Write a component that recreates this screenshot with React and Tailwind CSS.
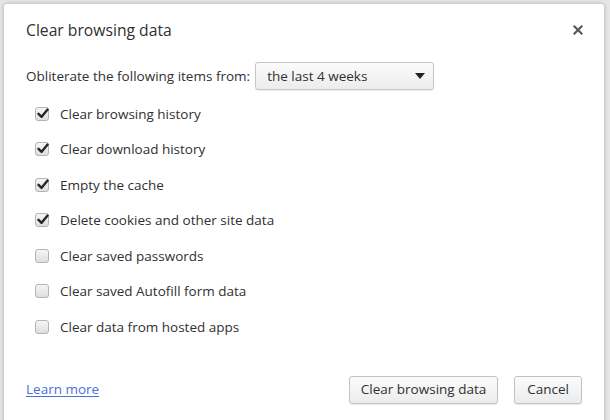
import React from "react";

const font = { fontFamily: '"Open Sans", "Noto Sans", sans-serif' };

function Check({ checked }) {
  return (
    <span className="relative flex h-[14px] w-[14px] items-center justify-center rounded-[3px] border border-[#b4b4b4] bg-gradient-to-b from-[#f6f6f6] to-[#dedede]">
      {checked && (
        <svg width="12" height="11" viewBox="0 0 12 11" className="absolute left-[1px] top-[0px]">
          <path d="M1.5 5.8 L4.6 8.8 L10.6 1.6" fill="none" stroke="#262626" strokeWidth="2.4" strokeLinecap="round" strokeLinejoin="round" />
        </svg>
      )}
    </span>
  );
}

const items = [
  ["Clear browsing history", true],
  ["Clear download history", true],
  ["Empty the cache", true],
  ["Delete cookies and other site data", true],
  ["Clear saved passwords", false],
  ["Clear saved Autofill form data", false],
  ["Clear data from hosted apps", false],
];

export default function App() {
  return (
    <div className="h-[420px] w-[610px] overflow-hidden bg-[#e6e6e6] pl-[4px] pt-[4px]" style={font}>
      <div className="h-[430px] w-[600px] rounded-[3px] bg-white px-[22px] text-[#303030] shadow-[0_0_4px_rgba(0,0,0,0.25)]">
        <div className="flex items-center justify-between pt-[16px]">
          <div className="text-[15.7px] leading-[20px]">Clear browsing data</div>
          <svg width="10" height="10" viewBox="0 0 10 10" className="mr-[-1px]">
            <path d="M1.5 1.5 L8.5 8.5 M8.5 1.5 L1.5 8.5" stroke="#595959" strokeWidth="2.2" strokeLinecap="square" />
          </svg>
        </div>
        <div className="mt-[22px] flex items-center text-[13.5px]">
          <span className="mr-[5px]">Obliterate the following items from:</span>
          <div className="flex h-[28px] w-[179px] items-center justify-between rounded-[3px] border border-[#c6c6c6] bg-gradient-to-b from-[#fbfbfb] to-[#ececec] pl-[11px] pr-[8px] shadow-[0_1px_1px_rgba(0,0,0,0.08)]">
            <span>the last 4 weeks</span>
            <svg width="10" height="6" viewBox="0 0 10 6">
              <path d="M0 0 L10 0 L5 6 Z" fill="#222" />
            </svg>
          </div>
        </div>
        <div className="mt-[6px] flex flex-col">
          {items.map(([label, c]) => (
            <div key={label} className="flex h-[35.5px] items-center pl-[9px] text-[13.5px]">
              <Check checked={c} />
              <span className="ml-[11px]">{label}</span>
            </div>
          ))}
        </div>
        <div className="mt-[31px] flex items-center justify-between text-[13.5px]">
          <a className="text-[#4a6fdc] underline underline-offset-2">Learn more</a>
          <div className="flex gap-[16px]">
            <button className="h-[28px] rounded-[3px] border border-[#c2c2c2] bg-gradient-to-b from-[#fbfbfb] to-[#ececec] px-[11px] shadow-[0_1px_1px_rgba(0,0,0,0.08)]">Clear browsing data</button>
            <button className="h-[28px] rounded-[3px] border border-[#c2c2c2] bg-gradient-to-b from-[#fbfbfb] to-[#ececec] px-[12px] shadow-[0_1px_1px_rgba(0,0,0,0.08)]">Cancel</button>
          </div>
        </div>
      </div>
    </div>
  );
}
